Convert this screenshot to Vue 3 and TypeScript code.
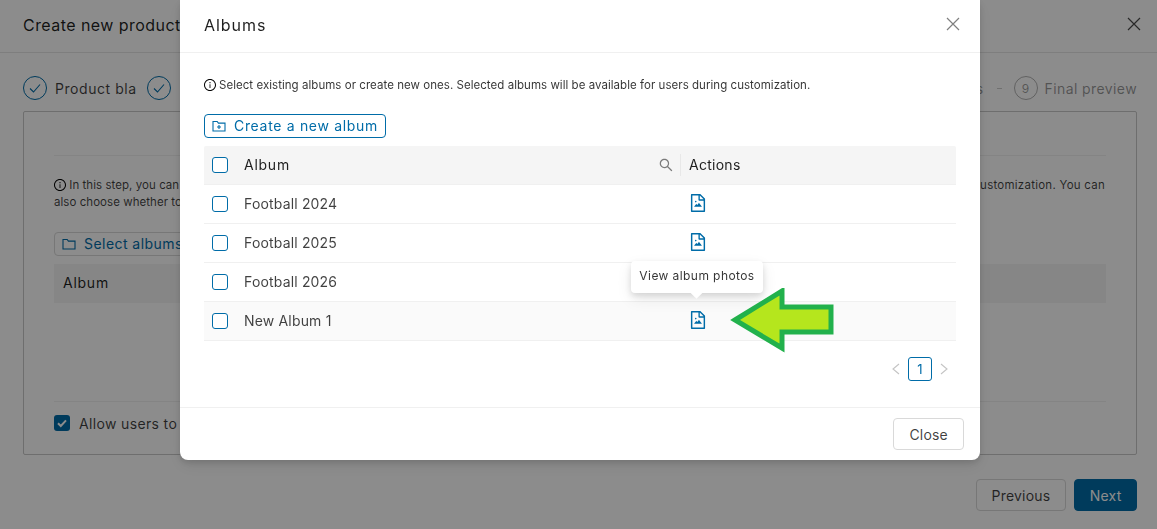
<script setup lang="ts">
const rows: string[] = ['Football 2024', 'Football 2025', 'Football 2026', 'New Album 1']
const fileImage =
  'M553.1 509.1l-77.8 99.2-41.1-52.4a8 8 0 00-12.6 0l-99.8 127.2a7.98 7.98 0 006.3 12.9H696c6.7 0 10.4-7.7 6.3-12.9l-136.5-174a8.1 8.1 0 00-12.7 0zM360 442a40 40 0 1080 0 40 40 0 10-80 0zm494.6-153.4L639.4 73.4c-6-6-14.1-9.4-22.6-9.4H192c-17.7 0-32 14.3-32 32v832c0 17.7 14.3 32 32 32h640c17.7 0 32-14.3 32-32V311.3c0-8.5-3.4-16.7-9.4-22.7zM790.2 326H602V137.8L790.2 326zm1.8 562H232V136h302v216a42 42 0 0042 42h216v494z'
const infoCircle =
  'M512 64C264.6 64 64 264.6 64 512s200.6 448 448 448 448-200.6 448-448S759.4 64 512 64zm0 820c-205.4 0-372-166.6-372-372s166.6-372 372-372 372 166.6 372 372-166.6 372-372 372zM464 336a48 48 0 1096 0 48 48 0 10-96 0zm72 112h-48c-4.4 0-8 3.6-8 8v272c0 4.4 3.6 8 8 8h48c4.4 0 8-3.6 8-8V456c0-4.4-3.6-8-8-8z'
const searchIcon =
  'M909.6 854.5L649.9 594.8C690.2 542.7 712 479 712 412c0-80.2-31.3-155.4-87.9-212.1-56.6-56.7-132-87.9-212.1-87.9s-155.5 31.3-212.1 87.9C143.2 256.5 112 331.8 112 412c0 80.1 31.3 155.5 87.9 212.1C256.5 680.8 331.8 712 412 712c67 0 130.6-21.8 182.7-62l259.7 259.6a8.2 8.2 0 0011.6 0l43.6-43.5a8.2 8.2 0 000-11.6zM570.4 570.4C528 612.7 471.8 636 412 636s-116-23.3-158.4-65.6C211.3 528 188 471.8 188 412s23.3-116.1 65.6-158.4C296 211.3 352.2 188 412 188s116.1 23.2 158.4 65.6S636 352.2 636 412s-23.3 116.1-65.6 158.4z'
</script>

<template>
  <div class="page">
    <header class="page-head">
      <span class="page-title">Create new product</span>
      <svg class="x" width="14" height="14" viewBox="0 0 14 14"><path d="M1 1l12 12M13 1L1 13" /></svg>
    </header>

    <div class="stepper">
      <div class="step">
        <span class="circle done"><svg width="14" height="14" viewBox="0 0 14 14"><path d="M2 7.5l3.5 3.5L12 3.5" /></svg></span>
        <span class="step-label clip">Product bla</span>
      </div>
      <span class="circle done second"><svg width="14" height="14" viewBox="0 0 14 14"><path d="M2 7.5l3.5 3.5L12 3.5" /></svg></span>
      <div class="step right">
        <span class="step-label muted">Albums</span>
        <span class="dash"></span>
        <span class="circle todo">9</span>
        <span class="step-label muted">Final preview</span>
      </div>
    </div>

    <section class="panel">
      <div class="rule"></div>
      <div class="bg-info">
        <div class="bg-line">
          <span><svg class="info-i" width="12" height="12" viewBox="64 64 896 896"><path :d="infoCircle" /></svg> In this step, you can</span>
          <span class="bg-right">customization. You can</span>
        </div>
        <div>also choose whether to</div>
      </div>
      <div class="select-btn">
        <svg width="14" height="14" viewBox="0 0 14 14"><path d="M1 12V2.5h4.2l1.2 1.6H13V12z" /></svg>
        <span>Select albums</span>
      </div>
      <div class="bg-table-head">Album</div>
      <div class="spacer"></div>
      <div class="rule"></div>
      <div class="allow">
        <span class="bg-check"><svg width="12" height="12" viewBox="0 0 12 12"><path d="M2 6.2l2.8 2.8L10 3.4" /></svg></span>
        <span>Allow users to upload</span>
      </div>
    </section>

    <footer class="page-foot">
      <button class="btn" type="button">Previous</button>
      <button class="btn primary" type="button">Next</button>
    </footer>
  </div>

  <div class="overlay">
    <div class="modal">
      <header class="modal-head">
        <span class="modal-title">Albums</span>
        <svg class="x light" width="14" height="14" viewBox="0 0 14 14"><path d="M1 1l12 12M13 1L1 13" /></svg>
      </header>

      <div class="modal-body">
        <p class="info">
          <svg width="12" height="12" viewBox="64 64 896 896"><path :d="infoCircle" /></svg>
          <span>Select existing albums or create new ones. Selected albums will be available for users during customization.</span>
        </p>

        <button class="create" type="button">
          <svg width="14" height="14" viewBox="0 0 14 14"><path d="M1 12V2.5h4.2l1.2 1.6H13V12zM7 6v4M5 8h4" /></svg>
          <span>Create a new album</span>
        </button>

        <div class="table">
          <div class="row head">
            <span class="box"></span>
            <span class="name">Album</span>
            <svg class="search" width="14" height="14" viewBox="64 64 896 896"><path :d="searchIcon" /></svg>
            <span class="sep"></span>
            <span class="actions">Actions</span>
          </div>
          <div v-for="(r, i) in rows" :key="r" class="row" :class="{ hover: i === 3 }">
            <span class="box"></span>
            <span class="name">{{ r }}</span>
            <span class="act-cell">
              <svg width="18" height="18" viewBox="64 64 896 896"><path :d="fileImage" /></svg>
              <span v-if="i === 3" class="tooltip">View album photos</span>
            </span>
          </div>
        </div>

        <div class="pager">
          <svg class="chev" width="10" height="12" viewBox="0 0 10 12"><path d="M8 1L2 6l6 5" /></svg>
          <span class="page-num">1</span>
          <svg class="chev" width="10" height="12" viewBox="0 0 10 12"><path d="M2 1l6 5-6 5" /></svg>
        </div>
      </div>

      <footer class="modal-foot">
        <button class="btn" type="button">Close</button>
      </footer>
    </div>

    <svg class="arrow" width="112" height="70" viewBox="0 0 112 70">
      <polygon points="5,32 52,3 52,19 101,19 101,44 52,44 52,60" />
    </svg>
  </div>
</template>

<style>
html, body { margin: 0; background: #fff; overflow: hidden; }
</style>

<style scoped>
* { box-sizing: border-box; }
.page, .overlay { font-family: Inter, "Open Sans", sans-serif; color: rgba(0, 0, 0, 0.88); }
.page { width: 1157px; height: 529px; display: flex; flex-direction: column; padding-bottom: 18px; }
.page-head { height: 53px; flex: none; display: flex; align-items: center; justify-content: space-between; padding: 0 16px 2px 23px; border-bottom: 1px solid #e6e6e6; }
.page-title { font-size: 16px; letter-spacing: 0.45px; }
.x { margin-bottom: 2px; }
.x path { fill: none; stroke: rgba(0, 0, 0, 0.7); stroke-width: 1.2; }
.x.light path { stroke: rgba(0, 0, 0, 0.5); }

.stepper { height: 58px; flex: none; display: flex; align-items: center; padding: 12px 20px 0 23px; font-size: 14px; }
.step { display: flex; align-items: center; }
.step.right { margin-left: auto; }
.circle { width: 24px; height: 24px; border-radius: 50%; display: flex; align-items: center; justify-content: center; flex: none; font-size: 12px; }
.circle.done { border: 1px solid #006ca8; }
.circle.done path { fill: none; stroke: #006ca8; stroke-width: 1.1; }
.circle.second { margin-left: 11px; }
.circle.todo { border: 1px solid rgba(0, 0, 0, 0.3); color: rgba(0, 0, 0, 0.4); margin-right: 7px; }
.step-label { margin-left: 8px; letter-spacing: 0.55px; color: rgba(0, 0, 0, 0.75); }
.step-label.clip { width: 81px; overflow: hidden; white-space: nowrap; }
.step-label.muted { margin-left: 0; letter-spacing: 0.4px; color: rgba(0, 0, 0, 0.42); }
.dash { width: 5px; height: 1px; background: rgba(0, 0, 0, 0.2); margin: 0 12px 0 13px; }

.panel { margin: 0 20px 0 23px; height: 344px; flex: none; border: 1px solid #c8c8c8; border-radius: 2px; padding: 43px 30px 0; display: flex; flex-direction: column; }
.rule { height: 1px; background: #f0f0f0; flex: none; }
.bg-info { margin-top: 21px; font-size: 11.5px; line-height: 17px; letter-spacing: 0.05px; color: rgba(0, 0, 0, 0.75); }
.bg-line { display: flex; justify-content: space-between; }
.bg-right { letter-spacing: 0.25px; padding-right: 1px; }
.info-i { vertical-align: -2px; }
.select-btn { margin-top: 21px; width: 180px; height: 24px; flex: none; display: flex; align-items: center; gap: 8px; padding: 0 0 1px 7px; border: 1px solid #d9d9d9; border-radius: 4px; color: #006ca8; font-size: 14px; letter-spacing: 0.45px; }
.select-btn path { fill: none; stroke: #006ca8; stroke-width: 1.1; }
.bg-table-head { margin-top: 8px; height: 39px; flex: none; background: #f5f5f5; padding: 0 0 3px 9px; display: flex; align-items: center; font-size: 14px; letter-spacing: 0.75px; }
.spacer { height: 98px; flex: none; }
.allow { margin-top: 13px; height: 16px; display: flex; align-items: center; gap: 9px; font-size: 14px; letter-spacing: 0.35px; color: rgba(0, 0, 0, 0.75); }
.bg-check { width: 16px; height: 16px; background: #006ca8; border-radius: 3px; display: flex; align-items: center; justify-content: center; }
.bg-check path { fill: none; stroke: #fff; stroke-width: 2; }

.page-foot { margin-top: auto; display: flex; justify-content: flex-end; gap: 8px; padding-right: 20px; }
.btn { height: 32px; padding: 0 15px; background: #fff; border: 1px solid #d9d9d9; border-radius: 4px; font: inherit; font-size: 14px; letter-spacing: 0.2px; color: rgba(0, 0, 0, 0.75); }
.btn.primary { background: #006ca8; border-color: #006ca8; color: #fff; padding: 0 14.5px; }

.overlay { position: fixed; inset: 0; background: rgba(0, 0, 0, 0.45); display: flex; justify-content: flex-start; align-items: flex-start; padding-left: 180px; }
.modal { width: 800px; height: 460px; background: #fff; border-radius: 0 0 8px 8px; box-shadow: 0 6px 16px rgba(0, 0, 0, 0.08), 0 3px 6px rgba(0, 0, 0, 0.12); display: flex; flex-direction: column; }
.modal-head { height: 53px; flex: none; display: flex; align-items: center; justify-content: space-between; padding: 0 20px 2px 24px; border-bottom: 1px solid #f0f0f0; }
.modal-title { font-size: 16px; letter-spacing: 0.95px; }
.modal-body { height: 354px; flex: none; padding: 23px 24px 0; }
.info { margin: 0; height: 18px; display: flex; align-items: center; gap: 3px; font-size: 11.5px; letter-spacing: 0.04px; color: rgba(0, 0, 0, 0.8); }
.create { margin-top: 20px; height: 24px; width: 182px; display: flex; align-items: center; gap: 8px; padding: 0 7px 1px; background: #fff; border: 1px solid #006ca8; border-radius: 4px; font: inherit; font-size: 14px; letter-spacing: 0.68px; color: #006ca8; }
.create path { fill: none; stroke: #006ca8; stroke-width: 1.1; }
.table { margin-top: 8px; }
.row { height: 39px; display: flex; align-items: center; padding-left: 8px; border-bottom: 1px solid #f0f0f0; font-size: 14px; letter-spacing: 0.17px; color: rgba(0, 0, 0, 0.75); }
.row.head { background: #f5f5f5; color: rgba(0, 0, 0, 0.88); border-radius: 2px 2px 0 0; }
.row.head .name { letter-spacing: 0.75px; }
.row.hover { background: #fafafa; }
.box { width: 16px; height: 16px; flex: none; border: 1.5px solid #006ca8; border-radius: 3px; background: #fff; margin-right: 16px; }
.name { width: 415px; flex: none; padding-bottom: 1px; }
.search { flex: none; }
.search path { fill: rgba(0, 0, 0, 0.5); }
.sep { width: 1px; height: 22px; background: #e8e8e8; margin: 0 8px 0 7px; flex: none; }
.actions { flex: none; letter-spacing: 0.27px; padding-bottom: 1px; }
.act-cell { position: relative; display: flex; margin-left: 30px; margin-top: -3px; }
.act-cell path { fill: #006ca8; }
.tooltip { position: absolute; left: -58px; bottom: 36px; width: 132px; height: 32px; padding-bottom: 2px; background: #fff; border-radius: 4px; box-shadow: 0 6px 16px rgba(0, 0, 0, 0.08), 0 3px 6px rgba(0, 0, 0, 0.12); font-size: 12px; letter-spacing: 0.42px; color: rgba(0, 0, 0, 0.8); display: flex; align-items: center; justify-content: center; white-space: nowrap; }
.tooltip::after { content: ""; position: absolute; left: 61px; bottom: -4px; width: 9px; height: 9px; background: #fff; transform: rotate(45deg); }
.pager { margin-top: 16px; display: flex; align-items: center; justify-content: flex-end; padding-right: 7px; gap: 7px; }
.chev path { fill: none; stroke: #c4c4c4; stroke-width: 1.1; }
.page-num { width: 24px; height: 24px; border: 1px solid #006ca8; border-radius: 3px; display: flex; align-items: center; justify-content: center; font-size: 13px; color: #006ca8; }
.modal-foot { height: 53px; flex: none; border-top: 1px solid #f0f0f0; display: flex; justify-content: flex-end; padding: 10px 16px; }
.arrow { position: absolute; left: 730px; top: 288px; }
.arrow polygon { fill: #b5e61d; stroke: #22b14c; stroke-width: 5; stroke-linejoin: miter; }
</style>
